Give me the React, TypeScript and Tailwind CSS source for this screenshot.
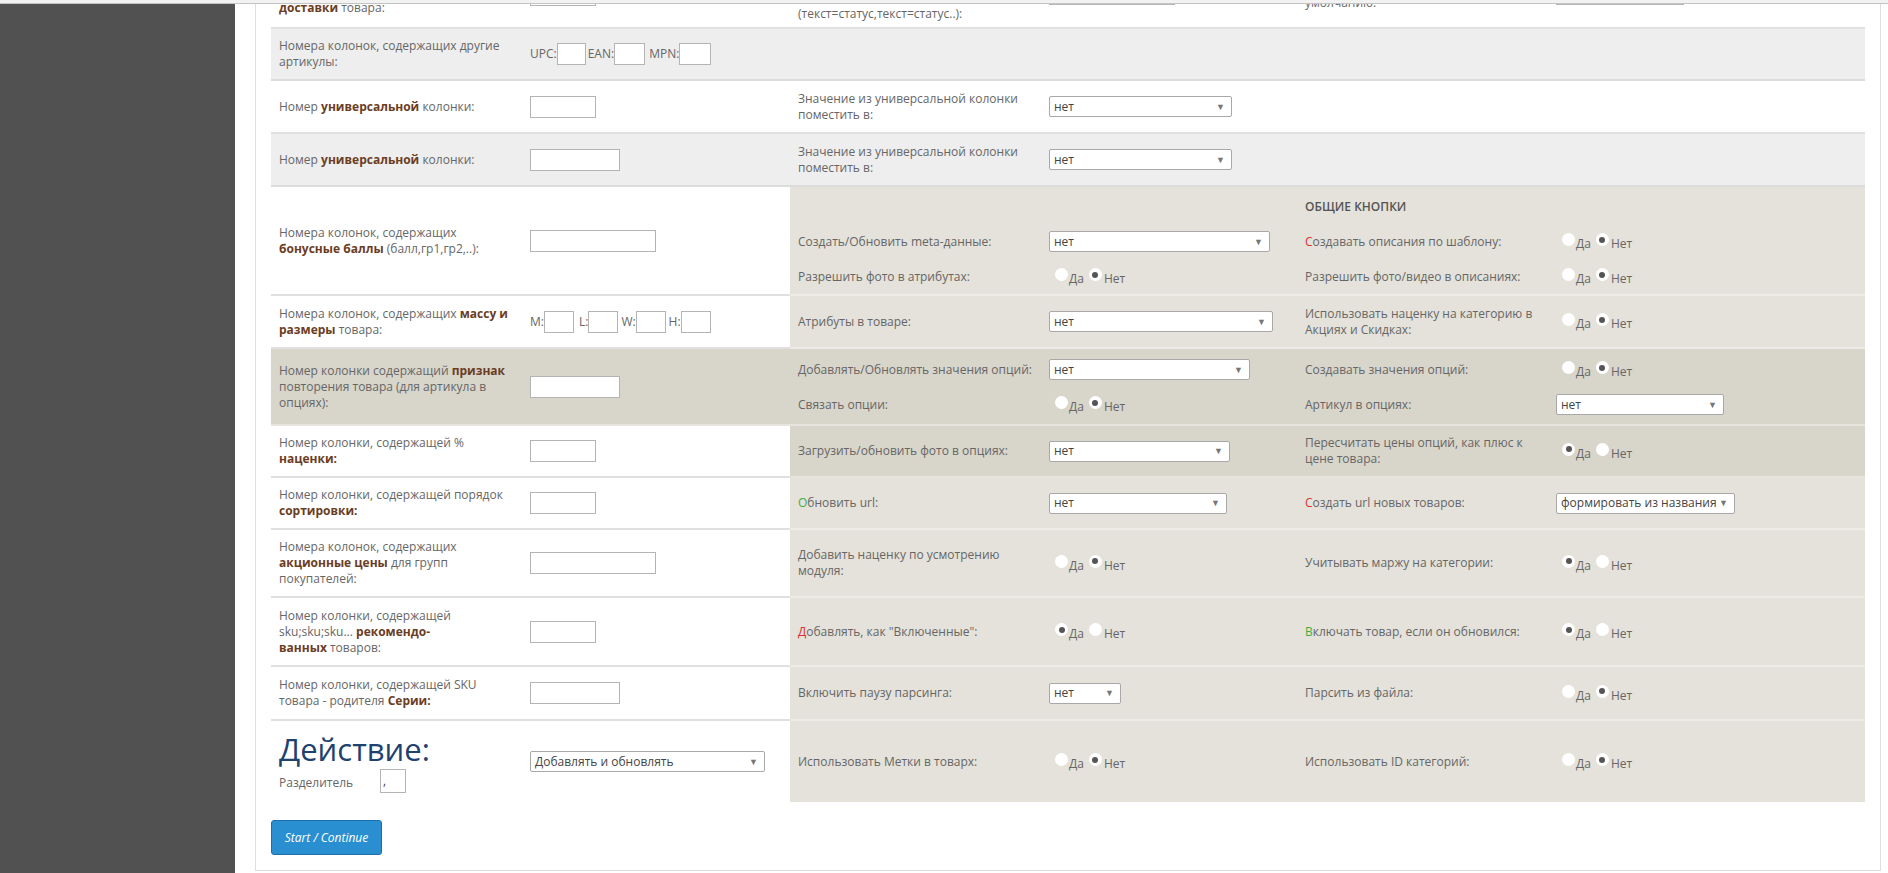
import React from 'react';

/**
 * Import settings page - parser options table
 */

const B = ({ children }: { children: React.ReactNode }) => (
  <b className="font-bold text-[#6b3d22]">{children}</b>
);

const Red = ({ children }: { children: React.ReactNode }) => <span className="text-[#e0302c]">{children}</span>;
const Green = ({ children }: { children: React.ReactNode }) => <span className="text-[#3fae3f]">{children}</span>;

const Box = ({ className }: { className: string }) => (
  <input type="text" readOnly className={`h-[22px] border border-[#b4b4b4] bg-white outline-none ${className}`} />
);

const Select = ({ value, className }: { value: string; className: string }) => (
  <div className={`flex h-[21px] items-center justify-between rounded-[2px] border border-[#a8a8a8] bg-white pl-[4px] pr-[6px] text-[#444] ${className}`}>
    <span className="whitespace-nowrap">{value}</span>
    <span className="text-[9px] text-[#777]">▼</span>
  </div>
);

const Dot = ({ on }: { on: boolean }) => (
  <span className="mb-[4px] flex h-[13px] w-[13px] shrink-0 items-center justify-center rounded-full bg-white">
    {on && <span className="h-[6px] w-[6px] rounded-full bg-[#555]" />}
  </span>
);

const Radios = ({ yes }: { yes: boolean }) => (
  <div className="ml-[6px] flex items-center">
    <Dot on={yes} />
    <span className="ml-[1px] pt-[5px]">Да</span>
    <span className="ml-[5px]"><Dot on={!yes} /></span>
    <span className="ml-[2px] pt-[5px]">Нет</span>
  </div>
);

const C1 = ({ children }: { children?: React.ReactNode }) => (
  <div className="flex w-[251px] shrink-0 items-center whitespace-nowrap pl-[8px]">{children}</div>
);
const C2 = ({ children }: { children?: React.ReactNode }) => (
  <div className="flex w-[268px] shrink-0 items-center pl-[8px]">{children}</div>
);
const C3 = ({ children }: { children?: React.ReactNode }) => (
  <div className="flex w-[251px] shrink-0 items-center whitespace-nowrap pl-[8px]">{children}</div>
);
const C4 = ({ children }: { children?: React.ReactNode }) => (
  <div className="flex w-[256px] shrink-0 items-center pl-[8px]">{children}</div>
);
const C5 = ({ children }: { children?: React.ReactNode }) => (
  <div className="flex w-[251px] shrink-0 items-center whitespace-nowrap pl-[8px]">{children}</div>
);
const C6 = ({ children }: { children?: React.ReactNode }) => (
  <div className="flex flex-1 items-center pl-[8px]">{children}</div>
);

type RowProps = {
  h: string;
  left: string;
  right: string;
  c1: React.ReactNode;
  c2: React.ReactNode;
  children?: React.ReactNode;
};

const Row = ({ h, left, right, c1, c2, children }: RowProps) => (
  <div className={`flex ${h}`}>
    <div className={`flex w-[519px] shrink-0 ${left}`}>
      <C1>{c1}</C1>
      <C2>{c2}</C2>
    </div>
    <div className={`flex flex-1 ${right}`}>{children}</div>
  </div>
);

const Sub = ({ children }: { children: React.ReactNode }) => <div className="flex h-[35px]">{children}</div>;

const App: React.FC = () => {
  const white = 'bg-white border-b-2 border-[#e0e0e0]';
  const gray = 'bg-[#eeeeee] border-b-2 border-[#dcdcdc]';
  const beige = 'bg-[#e4e2da] border-b-2 border-[#ecebe6]';
  const dark = 'bg-[#d8d5cb] border-b-2 border-[#e6e4dd]';

  return (
    <div className="h-[873px] overflow-hidden bg-white font-['Open_Sans','Noto_Sans',sans-serif] text-[12px] leading-[16px] text-[#666]">
      <div className="h-[4px] border-b border-[#c4c4c4] bg-[#f2f2f2]" />
      <div className="flex h-[869px] overflow-hidden">
        <aside className="w-[235px] shrink-0 bg-[#515151]" />
        <main className="flex-1 pl-[20px] pr-[7px]">
          <div className="border-x border-b border-[#dedede] px-[15px] pb-[15px]">
            {/* cut-off row */}
            <Row h="-mt-[31px] h-[56px]" left={white} right={white}
              c1={<div>Номер колонки, содержащей срок<br /><B>доставки</B> товара:</div>}
              c2={<Box className="mb-[10px] w-[66px]" />}>
              <C3><div className="mb-[4px]">Статусы товара, соответствие<br />значений в колонке<br />(текст=статус,текст=статус..):</div></C3>
              <C4><Box className="mb-[12px] w-[126px]" /></C4>
              <C5><div className="mb-[10px]">Статус товара по<br />умолчанию:</div></C5>
              <C6><Box className="mb-[12px] w-[128px]" /></C6>
            </Row>

            <Row h="h-[52px]" left={gray} right={gray}
              c1={<div>Номера колонок, содержащих другие<br />артикулы:</div>}
              c2={<div className="flex items-center">UPC:<Box className="w-[29px]" /><span className="ml-[2px]">EAN:</span><Box className="w-[31px]" /><span className="ml-[4px]">MPN:</span><Box className="w-[32px]" /></div>}>
              <C3 /><C4 /><C5 /><C6 />
            </Row>

            <Row h="h-[53px]" left={white} right={white}
              c1={<div>Номер <B>универсальной</B> колонки:</div>}
              c2={<Box className="w-[66px]" />}>
              <C3><div>Значение из универсальной колонки<br />поместить в:</div></C3>
              <C4><Select value="нет" className="w-[183px]" /></C4>
              <C5 /><C6 />
            </Row>

            <Row h="h-[53px]" left={gray} right={gray}
              c1={<div>Номер <B>универсальной</B> колонки:</div>}
              c2={<Box className="w-[90px]" />}>
              <C3><div>Значение из универсальной колонки<br />поместить в:</div></C3>
              <C4><Select value="нет" className="w-[183px]" /></C4>
              <C5 /><C6 />
            </Row>

            <Row h="h-[109px]" left={white} right={beige}
              c1={<div>Номера колонок, содержащих<br /><B>бонусные баллы</B> (балл,гр1,гр2,..):</div>}
              c2={<Box className="w-[126px]" />}>
              <div className="flex flex-1 flex-col pt-[2px]">
                <Sub>
                  <C3 /><C4 />
                  <C5><span className="text-[12px] font-semibold text-[#555]">ОБЩИЕ КНОПКИ</span></C5>
                  <C6 />
                </Sub>
                <Sub>
                  <C3>Создать/Обновить meta-данные:</C3>
                  <C4><Select value="нет" className="w-[221px]" /></C4>
                  <C5><span><Red>С</Red>оздавать описания по шаблону:</span></C5>
                  <C6><Radios yes={false} /></C6>
                </Sub>
                <Sub>
                  <C3>Разрешить фото в атрибутах:</C3>
                  <C4><Radios yes={false} /></C4>
                  <C5>Разрешить фото/видео в описаниях:</C5>
                  <C6><Radios yes={false} /></C6>
                </Sub>
              </div>
            </Row>

            <Row h="h-[53px]" left={white} right={beige}
              c1={<div>Номера колонок, содержащих <B>массу и</B><br /><B>размеры</B> товара:</div>}
              c2={<div className="flex items-center">M:<Box className="w-[30px]" /><span className="ml-[5px]">L:</span><Box className="w-[30px]" /><span className="ml-[3px]">W:</span><Box className="w-[30px]" /><span className="ml-[3px]">H:</span><Box className="w-[30px]" /></div>}>
              <C3>Атрибуты в товаре:</C3>
              <C4><Select value="нет" className="w-[224px]" /></C4>
              <C5><div>Использовать наценку на категорию в<br />Акциях и Скидках:</div></C5>
              <C6><Radios yes={false} /></C6>
            </Row>

            <Row h="h-[77px]" left={dark} right={dark}
              c1={<div>Номер колонки содержащий <B>признак</B><br />повторения товара (для артикула в<br />опциях):</div>}
              c2={<Box className="w-[90px]" />}>
              <div className="flex flex-1 flex-col pt-[3px]">
                <Sub>
                  <C3>Добавлять/Обновлять значения опций:</C3>
                  <C4><Select value="нет" className="w-[201px]" /></C4>
                  <C5>Создавать значения опций:</C5>
                  <C6><Radios yes={false} /></C6>
                </Sub>
                <Sub>
                  <C3>Связать опции:</C3>
                  <C4><Radios yes={false} /></C4>
                  <C5>Артикул в опциях:</C5>
                  <C6><Select value="нет" className="w-[168px]" /></C6>
                </Sub>
              </div>
            </Row>

            <Row h="h-[52px]" left={white} right={dark}
              c1={<div>Номер колонки, содержащей %<br /><B>наценки:</B></div>}
              c2={<Box className="w-[66px]" />}>
              <C3>Загрузить/обновить фото в опциях:</C3>
              <C4><Select value="нет" className="w-[181px]" /></C4>
              <C5><div>Пересчитать цены опций, как плюс к<br />цене товара:</div></C5>
              <C6><Radios yes={true} /></C6>
            </Row>

            <Row h="h-[52px]" left={white} right={beige}
              c1={<div>Номер колонки, содержащей порядок<br /><B>сортировки:</B></div>}
              c2={<Box className="w-[66px]" />}>
              <C3><span><Green>О</Green>бновить url:</span></C3>
              <C4><Select value="нет" className="w-[178px]" /></C4>
              <C5><span><Red>С</Red>оздать url новых товаров:</span></C5>
              <C6><Select value="формировать из названия" className="w-[179px]" /></C6>
            </Row>

            <Row h="h-[68px]" left={white} right={beige}
              c1={<div>Номера колонок, содержащих<br /><B>акционные цены</B> для групп<br />покупателей:</div>}
              c2={<Box className="w-[126px]" />}>
              <C3><div>Добавить наценку по усмотрению<br />модуля:</div></C3>
              <C4><Radios yes={false} /></C4>
              <C5>Учитывать маржу на категории:</C5>
              <C6><Radios yes={true} /></C6>
            </Row>

            <Row h="h-[69px]" left={white} right={beige}
              c1={<div>Номер колонки, содержащей<br />sku;sku;sku... <B>рекомендо-</B><br /><B>ванных</B> товаров:</div>}
              c2={<Box className="w-[66px]" />}>
              <C3><span><Red>Д</Red>обавлять, как "Включенные":</span></C3>
              <C4><Radios yes={true} /></C4>
              <C5><span><Green>В</Green>ключать товар, если он обновился:</span></C5>
              <C6><Radios yes={true} /></C6>
            </Row>

            <Row h="h-[54px]" left={white} right={beige}
              c1={<div>Номер колонки, содержащей SKU<br />товара - родителя <B>Серии:</B></div>}
              c2={<Box className="w-[90px]" />}>
              <C3>Включить паузу парсинга:</C3>
              <C4><Select value="нет" className="w-[72px]" /></C4>
              <C5>Парсить из файла:</C5>
              <C6><Radios yes={false} /></C6>
            </Row>

            <Row h="h-[81px]" left="bg-white" right="bg-[#e4e2da]"
              c1={
                <div className="flex flex-col">
                  <h2 className="text-[31px] leading-[36px] text-[#21416f]">Действие:</h2>
                  <div className="mt-[2px] flex items-center">
                    <span className="w-[101px] pt-[4px]">Разделитель</span>
                    <input type="text" readOnly defaultValue="," className="h-[24px] w-[26px] border border-[#b4b4b4] bg-white pl-[2px] text-[#444] outline-none" />
                  </div>
                </div>
              }
              c2={<Select value="Добавлять и обновлять" className="w-[235px]" />}>
              <C3>Использовать Метки в товарх:</C3>
              <C4><Radios yes={false} /></C4>
              <C5>Использовать ID категорий:</C5>
              <C6><Radios yes={false} /></C6>
            </Row>

            <div className="mt-[18px]">
              <button className="h-[35px] w-[111px] rounded-[3px] border border-[#1c6fa8] bg-[#2a8fd0] text-[12px] italic text-white">
                Start / Continue
              </button>
            </div>
          </div>
        </main>
      </div>
    </div>
  );
};

export default App;
